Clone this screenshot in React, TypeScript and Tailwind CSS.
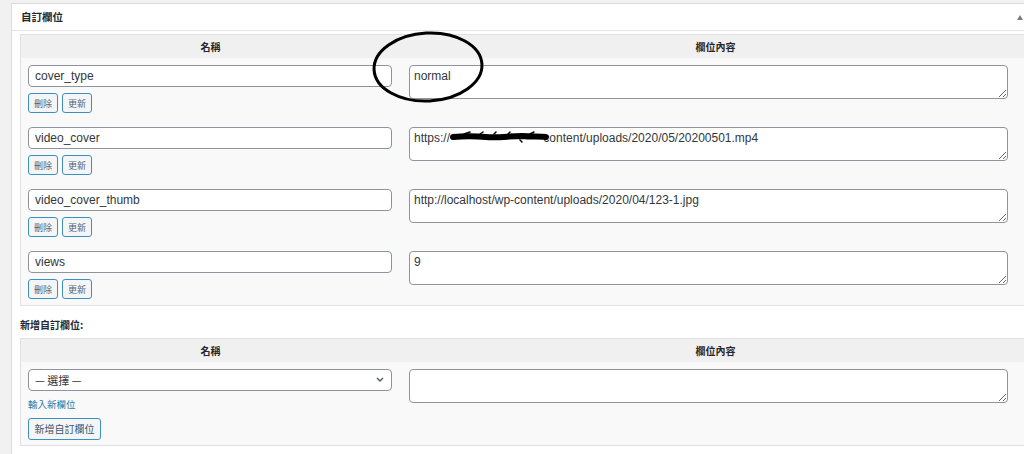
import React from 'react';

const LATIN = "font-['Liberation_Sans','Noto_Sans_CJK_TC',sans-serif]";
const CJK = "font-['Noto_Sans_CJK_TC','Liberation_Sans',sans-serif]";

// the domain part of the video url is blacked out in the screenshot
const hidden = ' '.repeat(28);

const meta = [
  { key: 'cover_type', value: 'normal' },
  { key: 'video_cover', value: `https://${hidden}content/uploads/2020/05/20200501.mp4`, redacted: true },
  { key: 'video_cover_thumb', value: 'http://localhost/wp-content/uploads/2020/04/123-1.jpg' },
  { key: 'views', value: '9' },
];

const SmallButton = ({ label }: { label: string }) => (
  <button
    className={`h-[20px] w-[30px] rounded-[3px] border border-[#3d8fc0] bg-[#f3f5f6] text-[9px] leading-none text-[#50677a] ${CJK}`}
  >
    {label}
  </button>
);

const TableHead = () => (
  <div className={`grid h-[23px] grid-cols-[379px_1fr] items-center bg-[#f0f0f0] text-center text-[10px] font-bold text-[#23282d] ${CJK}`}>
    <div>名稱</div>
    <div>欄位內容</div>
  </div>
);

const ValueBox = ({ value, redacted }: { value: string; redacted?: boolean }) => (
  <div className="relative w-[599px]">
    <textarea
      defaultValue={value}
      className={`block h-[34px] w-[599px] rounded-[4px] border border-[#8c959e] bg-white px-[4px] pt-[2px] text-[12px] leading-[16px] text-[#32373c] outline-none ${LATIN}`}
    />
    {redacted && (
      <svg className="absolute left-[41px] top-[4px]" width="100" height="12" viewBox="0 0 100 12">
        <path
          d="M3 6 C 14 5, 24 5, 36 6 C 48 7, 60 5, 72 5 C 82 6, 90 5, 96 6"
          stroke="#000"
          strokeWidth="6"
          strokeLinecap="round"
          fill="none"
        />
        <path
          d="M14 3 L 20 1 M 30 3 L 33 1 M 44 3 L 46 1 M 58 3 L 60 1 M 70 9 L 72 11 M 80 3 L 84 1"
          stroke="#000"
          strokeWidth="1.5"
          strokeLinecap="round"
        />
      </svg>
    )}
  </div>
);

export default function App() {
  return (
    <div className="relative h-[454px] w-[1024px] overflow-hidden bg-[#f1f1f1] pl-[11px] pt-[3px]">
      <div className="w-[1030px] border border-[#dcdcde] bg-white">
        <div className="flex h-[27px] items-center justify-between border-b border-[#e2e4e7] pl-[9px] pr-[17px]">
          <span className={`text-[10.5px] font-bold text-[#23282d] ${CJK}`}>自訂欄位</span>
          <svg width="6" height="5" viewBox="0 0 6 5">
            <path d="M0 5 L3 0 L6 5 Z" fill="#787c82" />
          </svg>
        </div>

        <div className="px-[8px] pt-[3px] pb-[8px]">
          <div className="border border-[#e1e1e1]">
            <TableHead />
            <div className="bg-[#f9f9f9]">
              {meta.map((m, i) => (
                <div key={m.key} className={`grid grid-cols-[379px_1fr] ${i === meta.length - 1 ? 'pt-[7px] pb-[6px]' : 'py-[7px]'}`}>
                  <div className="pl-[7px]">
                    <input
                      defaultValue={m.key}
                      className={`block h-[22px] w-[364px] rounded-[4px] border border-[#8c959e] bg-white px-[6px] text-[12px] text-[#32373c] outline-none ${LATIN}`}
                    />
                    <div className="mt-[6px] flex gap-[4px]">
                      <SmallButton label="刪除" />
                      <SmallButton label="更新" />
                    </div>
                  </div>
                  <div className="pl-[9px]">
                    <ValueBox value={m.value} redacted={m.redacted} />
                  </div>
                </div>
              ))}
            </div>
          </div>

          <div className={`pt-[10px] pb-[4px] text-[10px] font-bold leading-[18px] text-[#23282d] ${CJK}`}>
            新增自訂欄位:
          </div>

          <div className="border border-[#e1e1e1]">
            <TableHead />
            <div className="grid grid-cols-[379px_1fr] bg-[#f9f9f9] pt-[7px] pb-[5px]">
              <div className="pl-[7px]">
                <div className="relative w-[364px]">
                  <select
                    className={`block h-[22px] w-[364px] appearance-none rounded-[4px] border border-[#8c959e] bg-white pl-[6px] text-[11px] text-[#32373c] outline-none ${CJK}`}
                  >
                    <option>— 選擇 —</option>
                  </select>
                  <svg className="pointer-events-none absolute right-[8px] top-[8px]" width="8" height="6" viewBox="0 0 8 6">
                    <path d="M1 1 L4 4 L7 1" stroke="#50575e" strokeWidth="1.4" fill="none" />
                  </svg>
                </div>
                <div className={`mt-[5px] text-[9.5px] leading-[16px] text-[#2a7aa8] ${CJK}`}>輸入新欄位</div>
                <button
                  className={`mt-[6px] h-[22px] w-[73px] rounded-[3px] border border-[#3d8fc0] bg-[#f3f5f6] text-[10px] leading-none text-[#3e566a] ${CJK}`}
                >
                  新增自訂欄位
                </button>
              </div>
              <div className="pl-[9px]">
                <ValueBox value="" />
              </div>
            </div>
          </div>
        </div>
      </div>

      <svg className="pointer-events-none absolute left-[371px] top-[30px]" width="114" height="74" viewBox="0 0 114 74">
        <ellipse cx="57" cy="37" rx="54" ry="34" stroke="#000" strokeWidth="3" fill="none" transform="rotate(-3 57 37)" />
      </svg>
    </div>
  );
}
